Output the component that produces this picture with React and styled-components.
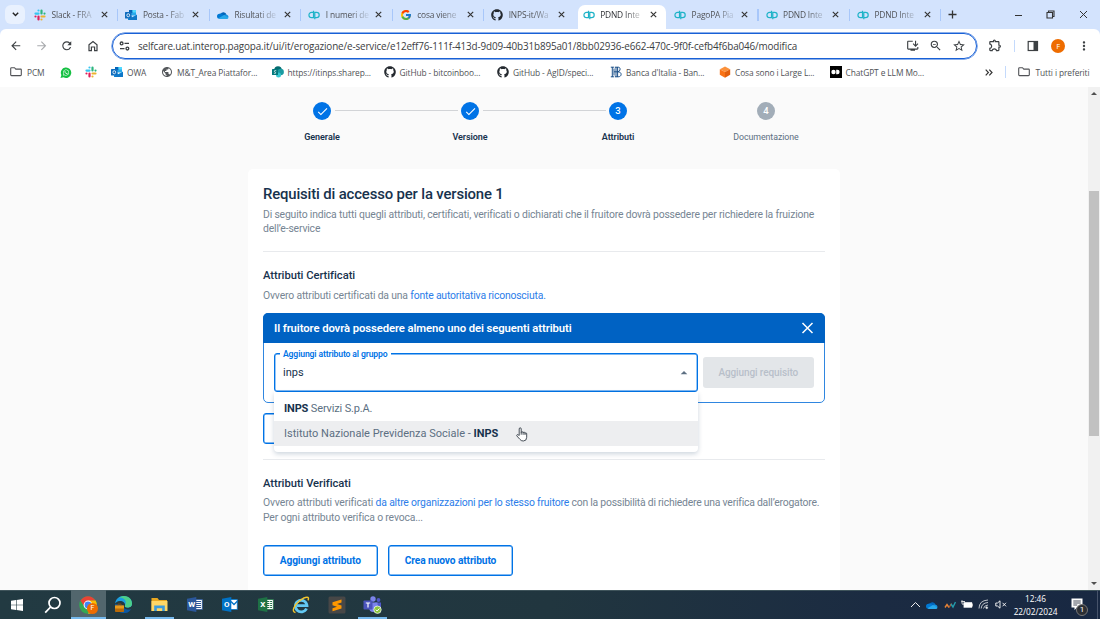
import React from 'react';
import styled, { createGlobalStyle, css } from 'styled-components';
import {
  MdArrowBack, MdArrowForward, MdRefresh, MdInstallDesktop, MdZoomOut,
  MdStarBorder, MdOutlineExtension, MdMoreVert, MdPublic, MdCheck, MdArrowDropUp,
} from 'react-icons/md';
import { FaGithub, FaWhatsapp } from 'react-icons/fa';
import { FcGoogle } from 'react-icons/fc';

const GlobalStyle = createGlobalStyle`
  * { box-sizing: border-box; }
  body { margin: 0; overflow: hidden; }
  svg { display: block; flex: none; }
`;

const Screen = styled.div`
  width: 1100px;
  height: 619px;
  display: flex;
  flex-direction: column;
  overflow: hidden;
  background: #fafafa;
  font-family: Roboto, "Liberation Sans", sans-serif;
`;

/* ---------- browser ---------- */

const Browser = styled.header`
  flex: none;
  height: 87px;
  background: #d3e3fd;
  color: #505256;
  font: 8.4px "Open Sans", "Noto Sans", sans-serif;
  letter-spacing: -0.1px;
`;

const TabStrip = styled.div`
  height: 29px;
  display: flex;
  align-items: center;
  padding-left: 5px;
`;

const TabSearch = styled.div`
  width: 20px;
  height: 19px;
  margin-right: 2px;
  border-radius: 6px;
  background: #e9f1fe;
  display: grid;
  place-items: center;
`;

const Tab = styled.div`
  position: relative;
  width: 91.45px;
  height: 24.5px;
  align-self: flex-end;
  display: flex;
  align-items: center;
  padding: 0 5px 4px 7px;
  ${(p) => p.$divider && css`
    &::after {
      content: '';
      position: absolute;
      right: 0;
      top: 4px;
      width: 1.2px;
      height: 12px;
      background: #a8c7fa;
    }
  `}
  ${(p) => p.$active && css`
    isolation: isolate;
    color: #303236;
    &::before {
      content: '';
      position: absolute;
      z-index: -1;
      inset: 0 1.5px 0 2.5px;
      border-radius: 7px 7px 0 0;
      background: #fff;
    }
  `}
`;

const TabTitle = styled.span`
  min-width: 44px;
  margin-left: 5.5px;
  white-space: nowrap;
  line-height: 14px;
  letter-spacing: -0.16px;
  -webkit-mask-image: linear-gradient(90deg, #000 24px, rgba(0, 0, 0, 0.15) 42px);
  mask-image: linear-gradient(90deg, #000 24px, rgba(0, 0, 0, 0.15) 42px);
`;

const TabClose = styled.span`
  margin-left: auto;
  margin-right: 5.5px;
  display: flex;
`;

const WindowControls = styled.div`
  margin-left: auto;
  display: flex;
  align-items: center;
  gap: 23.5px;
  padding-right: 12.5px;
`;

const Toolbar = styled.div`
  height: 33px;
  display: flex;
  align-items: center;
  padding-left: 9px;
  background: #fff;
  border-radius: 6px 6px 0 0;
  color: #3c4043;
`;

const NavButtons = styled.div`
  display: flex;
  gap: 12.2px;
  width: 102.5px;
`;

const Omnibox = styled.div`
  width: 865px;
  height: 26px;
  display: flex;
  align-items: center;
  padding: 0 9.5px 0 6.5px;
  border: 1.6px solid #1860d6;
  box-shadow: 0 0 0 0.5px #1860d6;
  border-radius: 13px;
`;

const Url = styled.span`
  flex: 1;
  margin-left: 8px;
  font-size: 9.9px;
  letter-spacing: -0.133px;
  line-height: 14px;
  white-space: nowrap;
`;

const OmniActions = styled.div`
  display: flex;
  align-items: center;
  gap: 9.5px;
`;

const ToolbarActions = styled.div`
  flex: 1;
  display: flex;
  align-items: center;
  justify-content: space-between;
  padding: 0 9px 0 11px;
`;

const VerticalRule = styled.span`
  width: 1.2px;
  height: 12px;
  background: #c4dafc;
`;

const Avatar = styled.span`
  width: 14px;
  height: 14px;
  border-radius: 50%;
  background: #ee6c00;
  color: #fff;
  font-size: 7.5px;
  display: grid;
  place-items: center;
`;

const BookmarkBar = styled.nav`
  height: 25px;
  display: flex;
  align-items: center;
  padding: 0 10.5px 5px 9.5px;
  background: #fff;
`;

const Bookmark = styled.span`
  width: ${(p) => p.$w}px;
  display: flex;
  align-items: center;
  gap: ${(p) => p.$gap ?? 4}px;
  white-space: nowrap;
`;

const BookmarkEnd = styled.span`
  margin-left: auto;
  display: flex;
  align-items: center;
  gap: 12px;
`;

const BlackTile = styled.span`
  width: 12px;
  height: 12px;
  background: #000;
  display: grid;
  place-items: center;
`;

/* ---------- page ---------- */

const Viewport = styled.div`
  flex: none;
  height: 503px;
  display: flex;
`;

const Page = styled.main`
  flex: 1;
  display: flex;
  flex-direction: column;
  align-items: center;
  overflow: hidden;
`;

const Stepper = styled.ol`
  flex: none;
  width: 592px;
  height: 81.5px;
  margin: 0;
  padding: 15px 0 0;
  display: flex;
  list-style: none;
`;

const Step = styled.li`
  position: relative;
  flex: 1;
  display: flex;
  flex-direction: column;
  align-items: center;
  color: ${(p) => (p.$idle ? '#5c6f82' : '#17324d')};
  font-size: ${(p) => (p.$idle ? 8.8 : 9)}px;
  font-weight: ${(p) => (p.$idle ? 400 : 600)};
  letter-spacing: -0.06px;
  line-height: 12px;
  gap: 11px;
  & + &::before {
    content: '';
    position: absolute;
    top: 8px;
    left: calc(-50% + 12.5px);
    right: calc(50% + 12.5px);
    height: 1px;
    background: #d2d4d7;
  }
`;

const StepDot = styled.span`
  width: 18px;
  height: 18px;
  border-radius: 50%;
  background: ${(p) => (p.$idle ? '#a2adb8' : '#0073e6')};
  color: #fff;
  font-size: 9.5px;
  font-weight: 500;
  display: grid;
  place-items: center;
`;

const Card = styled.section`
  flex: none;
  width: 592px;
  height: 430px;
  padding: 15.5px 15px 0;
  border-radius: 5px;
  background: #fff;
`;

const Title = styled.h1`
  margin: 0;
  font-size: 14.9px;
  line-height: 20px;
  font-weight: 500;
  letter-spacing: -0.15px;
  color: #17324d;
`;

const SectionTitle = styled.h2`
  margin: 0 0 4.5px;
  font-size: 11.2px;
  line-height: 16px;
  font-weight: 500;
  letter-spacing: -0.03px;
  color: #17324d;
`;

const Text = styled.p`
  margin: 0;
  font-size: 10.4px;
  line-height: 14.4px;
  letter-spacing: -0.168px;
  color: #768593;
  white-space: nowrap;
`;

const Intro = styled(Text)`
  margin-top: 4px;
`;

const Link = styled.a`
  color: #2b7de9;
  letter-spacing: -0.19px;
`;

const Spaced = styled.span`
  letter-spacing: ${(p) => p.$ls}px;
`;

const Divider = styled.hr`
  height: 1px;
  margin: ${(p) => p.$m};
  border: 0;
  background: #e8eaed;
`;

const Group = styled.div`
  height: 89.5px;
  margin-top: 10px;
  border: 1px solid #2f86e0;
  border-radius: 5px;
`;

const GroupHeader = styled.div`
  height: 30px;
  margin: -1px -1px 0;
  padding: 0 11px;
  display: flex;
  align-items: center;
  justify-content: space-between;
  border-radius: 5px 5px 0 0;
  background: #0062c3;
  color: #fff;
  font-size: 11.3px;
  font-weight: 600;
  letter-spacing: -0.09px;
`;

const GroupBody = styled.div`
  display: flex;
  align-items: flex-start;
  gap: 5px;
  padding: 10px 10px 0;
`;

const Autocomplete = styled.div`
  position: relative;
  width: 424px;
  height: 38.5px;
  padding: 0 5px 0 8px;
  display: flex;
  align-items: center;
  justify-content: space-between;
  border: 1.6px solid #0073e6;
  box-shadow: inset 0 0 0 0.4px #0073e6;
  border-radius: 3px;
  font-size: 11px;
  color: #17324d;
`;

const FieldLabel = styled.label`
  position: absolute;
  top: -6px;
  left: 5px;
  padding: 0 3px;
  background: #fff;
  color: #0073e6;
  font-size: 8.6px;
  line-height: 12px;
  font-weight: 600;
  letter-spacing: -0.125px;
  white-space: nowrap;
`;

const Caret = styled(MdArrowDropUp)`
  margin-top: 2px;
  color: #5c6f82;
`;

const Options = styled.ul`
  position: absolute;
  z-index: 2;
  top: 37.5px;
  left: -1px;
  width: 424px;
  height: 60.5px;
  margin: 0;
  padding: 4.5px 0;
  list-style: none;
  border-radius: 0 0 4px 4px;
  background: #fff;
  box-shadow: 0 2px 5px rgba(0, 43, 85, 0.2);
`;

const Option = styled.li`
  height: 25px;
  padding: 0 10px;
  line-height: 25.5px;
  letter-spacing: ${(p) => p.$ls ?? 0}px;
  color: #5c6f82;
  background: ${(p) => (p.$hover ? '#edeef0' : 'transparent')};
  b { color: #17324d; }
`;

const Pointer = styled.span`
  position: absolute;
  z-index: 3;
  top: 73px;
  left: 240.5px;
`;

const DisabledButton = styled.button`
  width: 110.5px;
  height: 31px;
  margin-top: 4px;
  padding: 0 0 1px;
  border: 0;
  border-radius: 3px;
  background: #e3e6e9;
  color: #b8bfc9;
  font: 500 10px Roboto, sans-serif;
  letter-spacing: -0.1px;
`;

const OutlineButton = styled.button`
  width: ${(p) => p.$w}px;
  height: 31px;
  padding: 0;
  border: 1.4px solid #0073e6;
  box-shadow: inset 0 0 0 0.4px #0073e6;
  border-radius: 3px;
  background: #fff;
  color: #0073e6;
  font: 700 10.2px Roboto, sans-serif;
  letter-spacing: -0.1px;
`;

const ButtonRow = styled.div`
  display: flex;
  gap: 10.5px;
  margin-top: ${(p) => p.$mt}px;
`;

const Scrollbar = styled.div`
  width: 12px;
  display: flex;
  flex-direction: column;
  align-items: center;
  background: #f1f1f1;
`;

const Arrow = styled.span`
  width: 0;
  height: 0;
  margin: ${(p) => (p.$down ? 'auto 0 5px' : '5px 0 0')};
  border: solid transparent;
  border-width: ${(p) => (p.$down ? '3px 3px 0' : '0 3px 3px')};
  ${(p) => (p.$down ? 'border-top-color' : 'border-bottom-color')}: #505050;
`;

const Thumb = styled.span`
  width: 10px;
  height: 245px;
  margin-top: 96px;
  background: #c1c1c1;
`;

/* ---------- taskbar ---------- */

const Taskbar = styled.footer`
  flex: none;
  height: 29px;
  display: flex;
  background: linear-gradient(90deg, #223a42 0%, #21363f 50%, #1b2b42 80%, #182842 100%);
  box-shadow: inset 0 1px #3f545b;
  color: #fff;
`;

const TaskApps = styled.div`
  display: flex;
  gap: 0.5px;
`;

const TaskApp = styled.span`
  position: relative;
  width: 35px;
  height: 29px;
  padding-right: 1px;
  display: grid;
  place-items: center;
  background: ${(p) => (p.$active ? '#52666d' : 'transparent')};
  ${(p) => (p.$open || p.$active) && css`
    &::after {
      content: '';
      position: absolute;
      bottom: 0;
      left: ${p.$active ? 0 : 3}px;
      right: ${p.$active ? 0 : 3}px;
      height: 2px;
      background: #76b9ed;
    }
  `}
`;

const AppBadge = styled.span`
  position: absolute;
  left: 16px;
  top: 13px;
  width: 11px;
  height: 11px;
  border-radius: 50%;
  background: #ee6c00;
  font-size: 7px;
  line-height: 11px;
  text-align: center;
`;

const Tray = styled.div`
  margin-left: auto;
  display: flex;
  align-items: center;
  padding-right: 2px;
`;

const TrayIcons = styled.div`
  display: flex;
  align-items: center;
  gap: 5.3px;
  margin-right: 7px;
`;

const Clock = styled.div`
  width: 44px;
  font: 8.3px/13px "Open Sans", "Noto Sans", sans-serif;
  letter-spacing: -0.03px;
  text-align: center;
`;

const Notifications = styled.div`
  position: relative;
  width: 27px;
  height: 29px;
  margin-left: 13.5px;
  padding-top: 8px;
  border-right: 1px solid #46536a;
`;

const Count = styled.span`
  position: absolute;
  left: 5px;
  top: 14px;
  width: 12px;
  height: 12px;
  border: 0.8px solid #777;
  border-radius: 50%;
  background: #2b2e33;
  font-size: 8px;
  line-height: 10.5px;
  text-align: center;
`;

/* ---------- drawings ---------- */

const SlackIcon = () => (
  <svg width="12" height="12" viewBox="0 0 24 24" strokeWidth="4.4" strokeLinecap="round">
    <path stroke="#36c5f0" d="M9 3v0M3 9.2h6" /><path stroke="#2eb67d" d="M15 3v6M21 9.2v0" />
    <path stroke="#ecb22e" d="M15 15h6M15 21v0" /><path stroke="#e01e5a" d="M9 15v6M3 15v0" />
  </svg>
);
const OutlookIcon = () => (
  <svg width="12" height="12" viewBox="0 0 24 24">
    <path fill="#28a8ea" d="M8 2h14v11H8z" /><path fill="#0364b8" d="M8 2h7v6H8z" /><path fill="#50d9ff" d="M15 2h7v5h-7z" />
    <path fill="#1490df" d="M6 11l9 5 9-5v11H6z" /><path fill="#0a5eb0" d="M6 22l18-10v10z" opacity=".5" />
    <rect y="6" width="13" height="13" rx="1" fill="#0f6cbd" />
    <ellipse cx="6.5" cy="12.5" rx="2.8" ry="3.1" fill="none" stroke="#fff" strokeWidth="1.6" />
  </svg>
);
const CloudIcon = () => (
  <svg width="12" height="8" viewBox="0 0 24 16">
    <path fill="#0364b8" d="M7 6a6.5 6.5 0 0 1 12 1L10 11z" /><path fill="#0078d4" d="M5 5.5c3-1 5 0 6 1l8 6-14 3A5 5 0 0 1 5 5.5z" />
    <path fill="#1490df" d="M14 8c4-3 9 0 9 4l-4 3z" /><path fill="#28a8ea" d="M3 14.5L14 8l9 5c-.5 2-2 3-4 3H6c-1 0-2-.5-3-1.500z" />
  </svg>
);
const PagoIcon = () => (
  <svg width="12" height="12" viewBox="0 0 24 24" fill="none" stroke="#1fb3c8" strokeWidth="2.4">
    <path d="M11 3.500V17.300H7.200a5.300 5.300 0 0 1 0-10.600H11M13.600 20.500V6.700h3.500a5.300 5.300 0 0 1 0 10.600h-3.500" />
  </svg>
);
const XIcon = () => (
  <svg width="7" height="7" viewBox="0 0 7 7" stroke="#333" strokeWidth="1.15"><path d="M.8.8l5.400 5.400M6.200.8L.8 6.200" /></svg>
);
const FolderIcon = () => (
  <svg width="12" height="10" viewBox="0 0 12 10" fill="none" stroke="#505256" strokeWidth="1.1">
    <path d="M.7 1.500q0-.8.8-.8h3l1.300 1.400h4.800q.7 0 .7.700v5q0 .8-.8.8h-9q-.8 0-.8-.8z" />
  </svg>
);
const HomeIcon = () => (
  <svg width="14" height="14" viewBox="0 0 14 14" fill="none" stroke="#3c4043" strokeWidth="1.2">
    <path d="M3 5.700L7 2.500l4 3.200v6H8.600V8H5.400v3.700H3z" />
  </svg>
);
const TuneIcon = () => (
  <svg width="11" height="10" viewBox="0 0 11 10" fill="none" stroke="#3c4043" strokeWidth="1.3">
    <circle cx="2.600" cy="2.400" r="1.400" /><path d="M5.500 2.400H10M1 7.600h4.500" /><circle cx="8.400" cy="7.600" r="1.400" />
  </svg>
);
const SidePanelIcon = () => (
  <svg width="12" height="12" viewBox="0 0 12 12"><rect x="1.200" y="1.500" width="9.300" height="9" fill="none" stroke="#3c4043" strokeWidth="1.2" /><path fill="#3c4043" d="M6.500 1.500h4v9h-4z" /></svg>
);
const SharepointIcon = () => (
  <svg width="12" height="12" viewBox="0 0 24 24">
    <circle cx="12" cy="8" r="7.500" fill="#036c70" /><circle cx="17.500" cy="12" r="6.300" fill="#1a9ba1" /><circle cx="13" cy="18" r="5" fill="#37c6d0" />
    <rect y="6" width="12" height="12" rx="1" fill="#03787c" />
    <path d="M8.500 9.500c-4-1.500-5 1.500-2.500 2.500s2.500 3.800-2.200 2.400" fill="none" stroke="#fff" strokeWidth="1.5" />
  </svg>
);
const BankIcon = () => (
  <svg width="12" height="12" viewBox="0 0 12 12" fill="none" stroke="#1d5189" strokeWidth="1">
    <path d="M.8 1.200h3.400M.8 10.800h3.400M2.300 1v10M4 2.500v7M6 1v10M7.600 1v10M5 1.200h3.400c2.400 0 2.400 4.300-.8 4.600c4.600-.2 4.600 5 .6 5H5M4 5.800h4" />
  </svg>
);
const CubeIcon = () => (
  <svg width="12" height="12" viewBox="0 0 12 12"><path fill="#fb923c" d="M6 .5l5.200 2.700L6 6 .8 3.200z" /><path fill="#f97316" d="M.8 3.200L6 6v5.700L.8 8.800z" /><path fill="#e25f0c" d="M11.200 3.200L6 6v5.700l5.200-2.900z" /></svg>
);
const HandCursor = () => (
  <svg width="12" height="15" viewBox="0 0 12 15" fill="#fff" stroke="#333c46" strokeWidth=".9" strokeLinejoin="round">
    <path d="M3.200 8.500V2q0-1.200 1-1.200t1 1.200v3.700q0-1 .9-1t1 1v.3q0-.9.900-.9t1 1v.5q0-.8.800-.8t.9 1v3.500q0 3.700-3.400 3.700-2.400 0-3.400-1.700L.8 8.900q-.4-.9.300-1.200t1.300.300z" />
    <path fill="none" d="M5.200 5.700v2M7.100 6v1.800M9 6.500V8" />
  </svg>
);
const WindowsIcon = () => (
  <svg width="12" height="12" viewBox="0 0 12 12" fill="#fff"><path d="M0 1.700l5-.7v4.700H0zM5.600.9L12 0v5.700H5.600zM0 6.300h5V11l-5-.7zM5.600 6.300H12V12l-6.400-.9z" /></svg>
);
const TaskSearchIcon = () => (
  <svg width="18" height="18" viewBox="0 0 18 18" fill="none" stroke="#fff" strokeWidth="1.7"><circle cx="10.500" cy="7" r="5.500" /><path d="M6.600 11L1.200 16.600" /></svg>
);
const ChromeIcon = () => (
  <svg width="18" height="18" viewBox="0 0 18 18">
    <circle cx="9" cy="9" r="8.800" fill="#34a853" /><path fill="#ea4335" d="M1.400 4.600a8.800 8.800 0 0 1 15.200 0L9 5 5.600 11z" /><path fill="#fbbc05" d="M16.600 4.600A8.800 8.800 0 0 1 9 17.800l3.500-7L9 4.600z" />
    <circle cx="9" cy="9" r="4.400" fill="#fff" /><circle cx="9" cy="9" r="3.400" fill="#4285f4" />
  </svg>
);
const EdgeIcon = () => (
  <svg width="19" height="19" viewBox="0 0 19 19">
    <path fill="#0c59a4" d="M1 9c0 6 5 9.500 10 9 3 0 5-2 6-4-3 1.500-8 0-8-4z" /><path fill="#1b9de2" d="M1 9C1.500 4 5 1 9.500 1 15 1 18 5 18 8.500c0 3-2 4-4.500 4s-3-1-2.500-2C11.500 8 9 6 6 6 3 6 1 8 1 9z" />
    <path fill="#4bd08b" d="M8 1.200C15 0 18 5 18 8.500c0 3-2 4-4.500 4s-3-1-2.500-2C13 6 11 3 5 2.500z" />
    <rect x="1" y="10.500" width="9" height="6.500" rx=".8" fill="#b96a08" /><path fill="#e99a1b" d="M1 10.500h9v3H1z" /><path d="M4 10.200V9h3v1.200" fill="none" stroke="#8a4b00" />
  </svg>
);
const ExplorerIcon = () => (
  <svg width="17" height="15" viewBox="0 0 17 15"><path fill="#e9a820" d="M.5 1h6l1.500 2H16v11H.5z" /><path fill="#ffd766" d="M.5 4H16.500v10H.5z" /><path fill="#3b9bdc" d="M3.200 14V8.500h10.600V14h-2.600v-2.800H5.800V14z" /></svg>
);
const OfficeIcon = ({ color, letter, kind }) => (
  <svg width="16" height="15" viewBox="0 0 16 15">
    <path fill="#fff" stroke={color} strokeWidth=".8" d="M8 2.500h7.300v10H8z" />
    {kind === 'mail' ? <path d="M9 4.500l3 3 3.500-3.500" fill="none" stroke={color} strokeWidth="1.3" /> : <path d="M9 4.500h5M9 6.500h5M9 8.500h5M9 10.500h5" stroke={color} />}
    {kind === 'grid' && <path d="M11.700 3v9" stroke="#fff" strokeWidth=".8" />}
    <path fill={color} d="M0 1.800L9.300 0v15L0 13.200z" />
    <text x="4.700" y="10.400" textAnchor="middle" fill="#fff" fontFamily="Roboto" fontWeight="700" fontSize="8">{letter}</text>
  </svg>
);
const ExplorerEIcon = () => (
  <svg width="18" height="18" viewBox="0 0 18 18" fill="none">
    <path d="M14.500 12.500A5.800 5.800 0 1 1 15 9.700H5" stroke="#63c9f3" strokeWidth="2.8" />
    <path d="M3.500 16.500C-1 16 2 9 8 4.500s10-4 8-.2" stroke="#f4c52c" strokeWidth="1.4" />
  </svg>
);
const SublimeIcon = () => (
  <svg width="18" height="18" viewBox="0 0 18 18"><rect x=".5" y=".5" width="17" height="17" rx="1.5" fill="#474747" /><path fill="#ff9800" d="M4.500 6.300L13.500 3.500v3L9 8l4.500 1.500v3l-9 2.700v-3L9 10.700 4.500 9.200z" /></svg>
);
const TeamsIcon = () => (
  <svg width="19" height="18" viewBox="0 0 19 18">
    <circle cx="10" cy="3" r="2.700" fill="#7b83eb" /><circle cx="15.500" cy="4" r="1.900" fill="#5059c9" /><path fill="#5059c9" d="M12 6.500h6v5q-1 3-4 2.500z" /><path fill="#7b83eb" d="M6 6.500h8.500V12q-1 4-4.500 4t-4-4z" />
    <rect x=".5" y="4.500" width="9" height="9" rx=".8" fill="#4b53bc" /><path d="M2.800 7h4.400M5 7v4.500" stroke="#fff" strokeWidth="1.2" />
    <circle cx="14.500" cy="13.700" r="3.700" fill="#8cc63f" stroke="#fff" strokeWidth=".7" /><path d="M12.800 13.700l1.300 1.300 2.300-2.500" stroke="#fff" fill="none" />
  </svg>
);

/* ---------- data ---------- */

const Github = () => <FaGithub size={12} color="#24292f" />;

const TABS = [
  { title: 'Slack - FRA', icon: <SlackIcon />, divider: true },
  { title: 'Posta - Fab', icon: <OutlookIcon />, divider: true },
  { title: 'Risultati de', icon: <CloudIcon />, divider: true },
  { title: 'I numeri de', icon: <PagoIcon />, divider: true },
  { title: 'cosa viene', icon: <FcGoogle size={12} />, divider: true },
  { title: 'INPS-it/Wa', icon: <Github /> },
  { title: 'PDND Inte', icon: <PagoIcon />, active: true },
  { title: 'PagoPA Pia', icon: <PagoIcon />, divider: true },
  { title: 'PDND Inte', icon: <PagoIcon />, divider: true },
  { title: 'PDND Inte', icon: <PagoIcon />, divider: true },
];

const BOOKMARKS = [
  { w: 50, gap: 5.5, icon: <FolderIcon />, label: 'PCM' },
  { w: 25.5, icon: <svg width="12" height="11" viewBox="0 0 12 11"><path d="M.5 11l.9-3A5.200 5.200 0 1 1 3.500 10.200z" fill="#16c043" /><FaWhatsapp size={7} x="2.500" y="2" color="#fff" /></svg> },
  { w: 26, icon: <SlackIcon /> },
  { w: 50, icon: <OutlookIcon />, label: 'OWA' },
  { w: 110.5, icon: <MdPublic size={12} color="#55585c" />, label: 'M&T_Area Piattafor...' },
  { w: 112, icon: <SharepointIcon />, label: 'https://itinps.sharep...' },
  { w: 113.5, icon: <Github />, label: 'GitHub - bitcoinboo...' },
  { w: 113, icon: <Github />, label: 'GitHub - AgID/speci...' },
  { w: 109, icon: <BankIcon />, label: "Banca d'Italia - Ban..." },
  { w: 110.5, icon: <CubeIcon />, label: 'Cosa sono i Large L...' },
  { w: 105, icon: <BlackTile><svg width="9" height="6" viewBox="0 0 9 6" fill="#fff"><circle cx="2.500" cy="3" r="2.200" /><path d="M5.200.8h1.200a2.200 2.200 0 0 1 0 4.400H5.200z" /></svg></BlackTile>, label: 'ChatGPT e LLM Mo...' },
];

const STEPS = [
  { label: 'Generale', mark: <MdCheck size={13} /> },
  { label: 'Versione', mark: <MdCheck size={13} /> },
  { label: 'Attributi', mark: '3' },
  { label: 'Documentazione', mark: '4', idle: true },
];

const APPS = [
  { icon: <WindowsIcon /> },
  { icon: <TaskSearchIcon /> },
  { icon: <><ChromeIcon /><AppBadge>F</AppBadge></>, active: true },
  { icon: <EdgeIcon /> },
  { icon: <ExplorerIcon />, open: true },
  { icon: <OfficeIcon color="#2b579a" letter="W" /> },
  { icon: <OfficeIcon color="#0072c6" letter="O" kind="mail" /> },
  { icon: <OfficeIcon color="#1e7145" letter="X" kind="grid" /> },
  { icon: <ExplorerEIcon /> },
  { icon: <SublimeIcon /> },
  { icon: <TeamsIcon />, open: true },
];

function BrowserChrome() {
  return (
    <Browser>
      <TabStrip>
        <TabSearch>
          <svg width="7" height="5" viewBox="0 0 7 5" fill="none" stroke="#222" strokeWidth="1.4"><path d="M.8.8l2.700 2.700L6.200.8" /></svg>
        </TabSearch>
        {TABS.map((t, i) => (
          <Tab key={i} $active={t.active} $divider={t.divider}>
            {t.icon}
            <TabTitle>{t.title}</TabTitle>
            <TabClose><XIcon /></TabClose>
          </Tab>
        ))}
        <svg width="22" height="9" viewBox="0 0 22 9" stroke="#333" strokeWidth="1.3"><path d="M7.500 4.500h8M11.500 .5v8" /></svg>
        <WindowControls>
          <svg width="9" height="10" viewBox="0 0 9 10" stroke="#333"><path d="M1 5.500h7" /></svg>
          <svg width="9" height="9" viewBox="0 0 9 9" fill="none" stroke="#333" strokeWidth="1.1"><path d="M1 2.500h5.500V8H1zM2.500 2.500V1H8v5.500H6.500" /></svg>
          <svg width="9" height="9" viewBox="0 0 9 9" stroke="#333"><path d="M1 1l7 7M8 1L1 8" /></svg>
        </WindowControls>
      </TabStrip>
      <Toolbar>
        <NavButtons>
          <MdArrowBack size={13.5} />
          <MdArrowForward size={13.5} color="#a9abae" />
          <MdRefresh size={13.5} />
          <HomeIcon />
        </NavButtons>
        <Omnibox>
          <TuneIcon />
          <Url>selfcare.uat.interop.pagopa.it/ui/it/erogazione/e-service/e12eff76-111f-413d-9d09-40b31b895a01/8bb02936-e662-470c-9f0f-cefb4f6ba046/modifica</Url>
          <OmniActions>
            <MdInstallDesktop size={13.5} />
            <MdZoomOut size={13.5} />
            <MdStarBorder size={14} />
          </OmniActions>
        </Omnibox>
        <ToolbarActions>
          <MdOutlineExtension size={14.5} />
          <VerticalRule />
          <SidePanelIcon />
          <Avatar>F</Avatar>
          <MdMoreVert size={14} />
        </ToolbarActions>
      </Toolbar>
      <BookmarkBar>
        {BOOKMARKS.map((b, i) => (
          <Bookmark key={i} $w={b.w} $gap={b.gap}>{b.icon}{b.label}</Bookmark>
        ))}
        <BookmarkEnd>
          <svg width="8" height="7" viewBox="0 0 8 7" fill="none" stroke="#333" strokeWidth="1.2"><path d="M.7.7l2.700 2.800L.7 6.300M4.300.7L7 3.500 4.300 6.300" /></svg>
          <VerticalRule />
          <Bookmark $gap={5.5}><FolderIcon />Tutti i preferiti</Bookmark>
        </BookmarkEnd>
      </BookmarkBar>
    </Browser>
  );
}

function RequirementsCard() {
  return (
    <Card>
      <Title>Requisiti di accesso per la versione 1</Title>
      <Intro>
        Di seguito indica tutti quegli attributi, certificati, verificati o dichiarati che il fruitore dovrà possedere per richiedere la fruizione
        <br />dell’e-service
      </Intro>
      <Divider $m="14.5px 0 16px" />
      <SectionTitle>Attributi Certificati</SectionTitle>
      <Text>Ovvero attributi certificati da una <Link>fonte autoritativa riconosciuta.</Link></Text>
      <Group>
        <GroupHeader>
          Il fruitore dovrà possedere almeno uno dei seguenti attributi
          <svg width="13" height="12" viewBox="0 0 13 12" stroke="#fff" strokeWidth="1.5"><path d="M1.500 1l10 10M11.500 1l-10 10" /></svg>
        </GroupHeader>
        <GroupBody>
          <Autocomplete>
            <FieldLabel>Aggiungi attributo al gruppo</FieldLabel>
            inps
            <Caret size={16} />
            <Options>
              <Option $ls={-0.15}><b>INPS</b> Servizi S.p.A.</Option>
              <Option $hover>Istituto Nazionale Previdenza Sociale - <b>INPS</b></Option>
            </Options>
            <Pointer><HandCursor /></Pointer>
          </Autocomplete>
          <DisabledButton disabled>Aggiungi requisito</DisabledButton>
        </GroupBody>
      </Group>
      <ButtonRow $mt={10}><OutlineButton $w={114.5} /></ButtonRow>
      <Divider $m="15.5px 0" />
      <SectionTitle>Attributi Verificati</SectionTitle>
      <Text>
        <Spaced $ls={-0.1}>Ovvero attributi verificati </Spaced>
        <Link>da altre organizzazioni per lo stesso fruitore</Link>
        <Spaced $ls={-0.22}> con la possibilità di richiedere una verifica dall’erogatore.</Spaced>
        <br />Per ogni attributo verifica o revoca...
      </Text>
      <ButtonRow $mt={20}>
        <OutlineButton $w={114.5}>Aggiungi attributo</OutlineButton>
        <OutlineButton $w={125}>Crea nuovo attributo</OutlineButton>
      </ButtonRow>
    </Card>
  );
}

function SystemTaskbar() {
  return (
    <Taskbar>
      <TaskApps>
        {APPS.map((a, i) => <TaskApp key={i} $active={a.active} $open={a.open}>{a.icon}</TaskApp>)}
      </TaskApps>
      <Tray>
        <TrayIcons>
          <svg width="11" height="7" viewBox="0 0 11 7" fill="none" stroke="#eee"><path d="M1 6l4.500-4.500L10 6" /></svg>
          <CloudIcon />
          <svg width="12" height="8" viewBox="0 0 12 8" fill="none" strokeWidth="1.4"><path stroke="#e88436" d="M1 6.500l2-3 2 3" /><path stroke="#ab5f36" d="M5 6.500l2.500-4" /><path stroke="#249cab" d="M7 3l2 3 2.500-5" /></svg>
          <svg width="12" height="9" viewBox="0 0 12 9"><path fill="none" stroke="#ddd" d="M.3 1.500H4M1 .2v3.500q1 1.500 2 0" /><rect x="2.600" y="2.200" width="8.500" height="5.500" fill="#fff" /><path fill="#bbb" d="M11 3.500h1v3h-1z" /></svg>
          <svg width="11" height="11" viewBox="0 0 11 11" fill="none" stroke="#ccd0d5" strokeWidth=".9"><path d="M1 9.500Q1 1.500 10 1M3.200 9.500Q3.500 4 10 3.500M5.500 9.500Q6 6.500 10 6" /><circle cx="8.700" cy="8.700" r=".9" fill="#fff" /></svg>
          <svg width="12" height="9" viewBox="0 0 12 9" fill="none" stroke="#fff" strokeWidth=".9"><path d="M.8 3h1.700L5 .8v7.400L2.500 6H.8zM7.500 2.800l3.500 3.500M11 2.800L7.500 6.300" /></svg>
        </TrayIcons>
        <Clock>12:46<br />22/02/2024</Clock>
        <Notifications>
          <svg width="12" height="12" viewBox="0 0 12 12"><path fill="#fff" d="M.5.5h11v9H6L3.500 12V9.500h-3z" /><path stroke="#333b49" strokeWidth=".9" d="M2.300 3h7.400M2.300 5h7.400M2.300 7h4" /></svg>
          <Count>1</Count>
        </Notifications>
      </Tray>
    </Taskbar>
  );
}

export default function App() {
  return (
    <Screen>
      <GlobalStyle />
      <BrowserChrome />
      <Viewport>
        <Page>
          <Stepper>
            {STEPS.map((s) => (
              <Step key={s.label} $idle={s.idle}><StepDot $idle={s.idle}>{s.mark}</StepDot>{s.label}</Step>
            ))}
          </Stepper>
          <RequirementsCard />
        </Page>
        <Scrollbar><Arrow /><Thumb /><Arrow $down /></Scrollbar>
      </Viewport>
      <SystemTaskbar />
    </Screen>
  );
}
